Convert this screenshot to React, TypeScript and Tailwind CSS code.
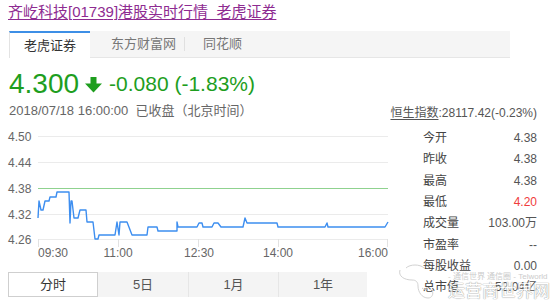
import React from "react";

const font = { fontFamily: '"Liberation Sans", "Noto Sans CJK SC", sans-serif' };

const stats = [
  { label: "今开", value: "4.38" },
  { label: "昨收", value: "4.38" },
  { label: "最高", value: "4.38" },
  { label: "最低", value: "4.20", red: true },
  { label: "成交量", value: "103.00万" },
  { label: "市盈率", value: "--" },
  { label: "每股收益", value: "0.00" },
  { label: "总市值", value: "52.04亿" },
];

const yLabels = [
  { text: "4.50", y: 17 },
  { text: "4.44", y: 43 },
  { text: "4.38", y: 69 },
  { text: "4.32", y: 95 },
  { text: "4.26", y: 120 },
];

const points: [number, number][] = [
  [38, 99], [39, 82], [41, 91], [43, 91], [45, 82], [49, 82], [50, 78], [56, 78],
  [57, 73], [69, 73], [70, 104], [71, 82], [72, 82], [74, 99], [78, 99], [80, 91],
  [86, 91], [87, 103], [93, 103], [95, 120], [98, 120], [99, 116], [115, 116],
  [117, 103], [119, 116], [120, 103], [127, 103], [132, 116], [147, 116], [148, 108],
  [157, 108], [158, 112], [177, 112], [177, 103], [178, 108], [197, 108], [199, 104],
  [202, 104], [203, 108], [212, 108], [214, 104], [218, 104], [221, 108], [243, 108],
  [245, 99], [247, 104], [277, 104], [278, 108], [325, 108], [327, 104], [328, 108],
  [385, 108], [388, 103],
];

function Chart() {
  return (
    <svg width="390" height="153" className="block">
      {yLabels.map((l) => (
        <g key={l.text}>
          {l.text !== "4.38" && (
            <line x1="38" x2="388" y1={l.y + 0.5} y2={l.y + 0.5} stroke="#ebebeb" />
          )}
          <text x="8" y={l.y + 4.5} fontSize="12" fill="#666">
            {l.text}
          </text>
        </g>
      ))}
      <line x1="38" x2="388" y1="69.5" y2="69.5" stroke="#8fd28f" strokeWidth="1.2" />
      {[38, 118, 198, 278, 387].map((x) => (
        <line key={x} x1={x + 0.5} x2={x + 0.5} y1="120" y2="128" stroke="#e2e2e2" />
      ))}
      <polyline
        points={points.map((p) => p.join(",")).join(" ")}
        fill="none"
        stroke="#3d8ef0"
        strokeWidth="1.4"
        strokeLinejoin="round"
      />
      <text x="38" y="138" fontSize="12" fill="#666">09:30</text>
      <text x="118" y="138" fontSize="12" fill="#666" textAnchor="middle">11:00</text>
      <text x="199" y="138" fontSize="12" fill="#666" textAnchor="middle">12:30</text>
      <text x="278" y="138" fontSize="12" fill="#666" textAnchor="middle">14:00</text>
      <text x="388" y="138" fontSize="12" fill="#666" textAnchor="end">16:00</text>
    </svg>
  );
}

function DownArrow() {
  return (
    <svg width="17" height="17" viewBox="0 0 17 17" className="ml-[6px] shrink-0">
      <rect x="5.5" y="1" width="6" height="8" fill="#1e9e1e" />
      <polygon points="0,7.5 17,7.5 8.5,16.5" fill="#1e9e1e" />
    </svg>
  );
}

export default function App() {
  return (
    <div className="relative w-[550px] h-[305px] overflow-hidden bg-white" style={font}>
      <div className="h-[25px] pl-[8px] pt-[2px] text-[15px] leading-[20px]">
        <a className="text-[#8e2b91] underline underline-offset-[2px] decoration-[1px]">
          齐屹科技[01739]港股实时行情_老虎证券
        </a>
      </div>

      <div className="mt-[6px] ml-[9px] flex h-[27px] w-[501px] bg-[#f5f5f5] text-[13px]">
        <div className="flex w-[81px] items-center justify-center border-t-2 border-l border-t-[#3d8fe6] border-l-[#e3e3e3] bg-white text-[#333]">
          老虎证券
        </div>
        <div className="flex flex-1 items-center border-b border-[#e6e6e6] text-[#777]">
          <span className="pl-[21px] pr-[8px]">东方财富网</span>
          <span className="h-[14px] w-px bg-[#e0e0e0]" />
          <span className="pl-[18px]">同花顺</span>
        </div>
      </div>

      <div className="flex">
        <div className="w-[390px]">
          <div className="mt-[10px] flex h-[32px] items-center pl-[9px] text-[#1e9e1e]">
            <span className="text-[28px] leading-[32px]">4.300</span>
            <DownArrow />
            <span className="ml-[7px] text-[21px] leading-[32px]">-0.080 (-1.83%)</span>
          </div>
          <div className="mt-[3px] h-[16px] pl-[9px] text-[13px] leading-[16px] text-[#666]">
            2018/07/18 16:00:00&nbsp;&nbsp;已收盘（北京时间）
          </div>
          <Chart />
          <div className="ml-[8px] flex h-[25px] w-[359px] text-[13px]">
            <div className="flex w-[90px] items-center justify-center border border-[#cfcfcf] bg-white text-[#333]">
              分时
            </div>
            <div className="flex w-[90px] items-center justify-center bg-[#f4f4f4] text-[#555]">5日</div>
            <div className="flex w-[90px] items-center justify-center border-l border-[#e6e6e6] bg-[#f4f4f4] text-[#555]">
              1月
            </div>
            <div className="flex w-[89px] items-center justify-center border-l border-[#e6e6e6] bg-[#f4f4f4] text-[#555]">
              1年
            </div>
          </div>
        </div>

        <div className="flex-1 pr-[13px]">
          <div className="mt-[47px] h-[16px] text-right text-[12px] leading-[16px] text-[#555]">
            <span className="underline underline-offset-[2px]">恒生指数</span>:28117.42(-0.23%)
          </div>
          <div className="mt-[6.5px] pl-[33px] text-[12px]">
            {stats.map((s) => (
              <div key={s.label} className="flex h-[21.3px] items-center justify-between">
                <span className="text-[#444]">{s.label}</span>
                <span className={s.red ? "text-[#f03c3c]" : "text-[#555]"}>{s.value}</span>
              </div>
            ))}
          </div>
        </div>
      </div>

      <div className="pointer-events-none absolute left-[396px] top-[262px] flex items-end opacity-80">
        <svg width="48" height="40" viewBox="0 0 48 40" fill="none" stroke="#c8c8c8" strokeWidth="1">
          <path d="M4 8 C2 14 8 18 16 18 C20 18 22 20 22 24 C22 30 26 36 32 36 C36 36 38 32 36 28" />
          <path d="M10 6 C14 2 24 2 28 6" />
          <path d="M26 26 C28 28 30 28 32 26" />
        </svg>
        <div className="ml-[4px] flex flex-col items-start">
          <span className="text-[8px] leading-[10px] text-[#c0c0c0]">- 通信世界 通信圈 - Telworld</span>
          <span className="text-[17px] leading-[20px] text-white [text-shadow:0_0_1px_#888,0_0_1px_#888]">
            运营商世界网
          </span>
        </div>
      </div>
    </div>
  );
}
